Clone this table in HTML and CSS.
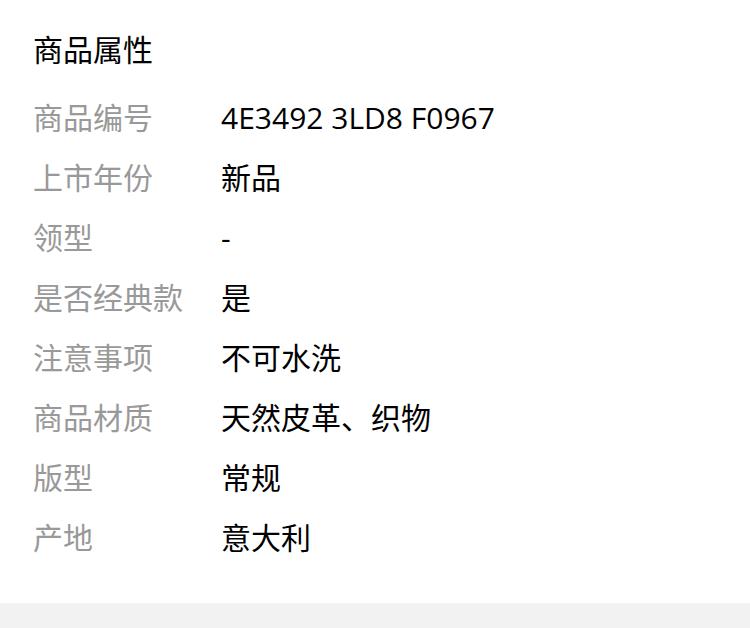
FILE: index.html
```html
<!DOCTYPE html>
<html lang="zh">
<head>
  <meta charset="UTF-8">
  <title>商品属性</title>
  <link rel="stylesheet" href="styles.css">
</head>
<body>
  <div class="attr-panel">
    <h2 class="attr-title">商品属性</h2>
    <ul class="attr-list">
      <li class="attr-row"><span class="attr-label">商品编号</span><span class="attr-value">4E3492 3LD8 F0967</span></li>
      <li class="attr-row"><span class="attr-label">上市年份</span><span class="attr-value">新品</span></li>
      <li class="attr-row"><span class="attr-label">领型</span><span class="attr-value">-</span></li>
      <li class="attr-row"><span class="attr-label">是否经典款</span><span class="attr-value">是</span></li>
      <li class="attr-row"><span class="attr-label">注意事项</span><span class="attr-value">不可水洗</span></li>
      <li class="attr-row"><span class="attr-label">商品材质</span><span class="attr-value">天然皮革、织物</span></li>
      <li class="attr-row"><span class="attr-label">版型</span><span class="attr-value">常规</span></li>
      <li class="attr-row"><span class="attr-label">产地</span><span class="attr-value">意大利</span></li>
    </ul>
  </div>
  <div class="gap-band"></div>
</body>
</html>
```

FILE: styles.css
```css
body {
  margin: 0;
  padding: 0;
  background: #fff;
  font-family: 'Open Sans', 'Noto Sans CJK SC', sans-serif;
}

.attr-panel {
  padding: 20px 33px 35px;
}

.attr-title {
  margin: 0 0 8px;
  font-size: 30px;
  font-weight: 400;
  line-height: 60px;
  color: #000;
}

.attr-list {
  list-style: none;
  margin: 0;
  padding: 0;
}

.attr-row {
  display: flex;
  font-size: 30px;
  line-height: 60px;
}

.attr-label {
  width: 188px;
  flex-shrink: 0;
  color: #999;
}

.attr-value {
  color: #000;
}

/* 下の区切り帯 */
.gap-band {
  height: 40px;
  background: #f2f2f2;
}
```
